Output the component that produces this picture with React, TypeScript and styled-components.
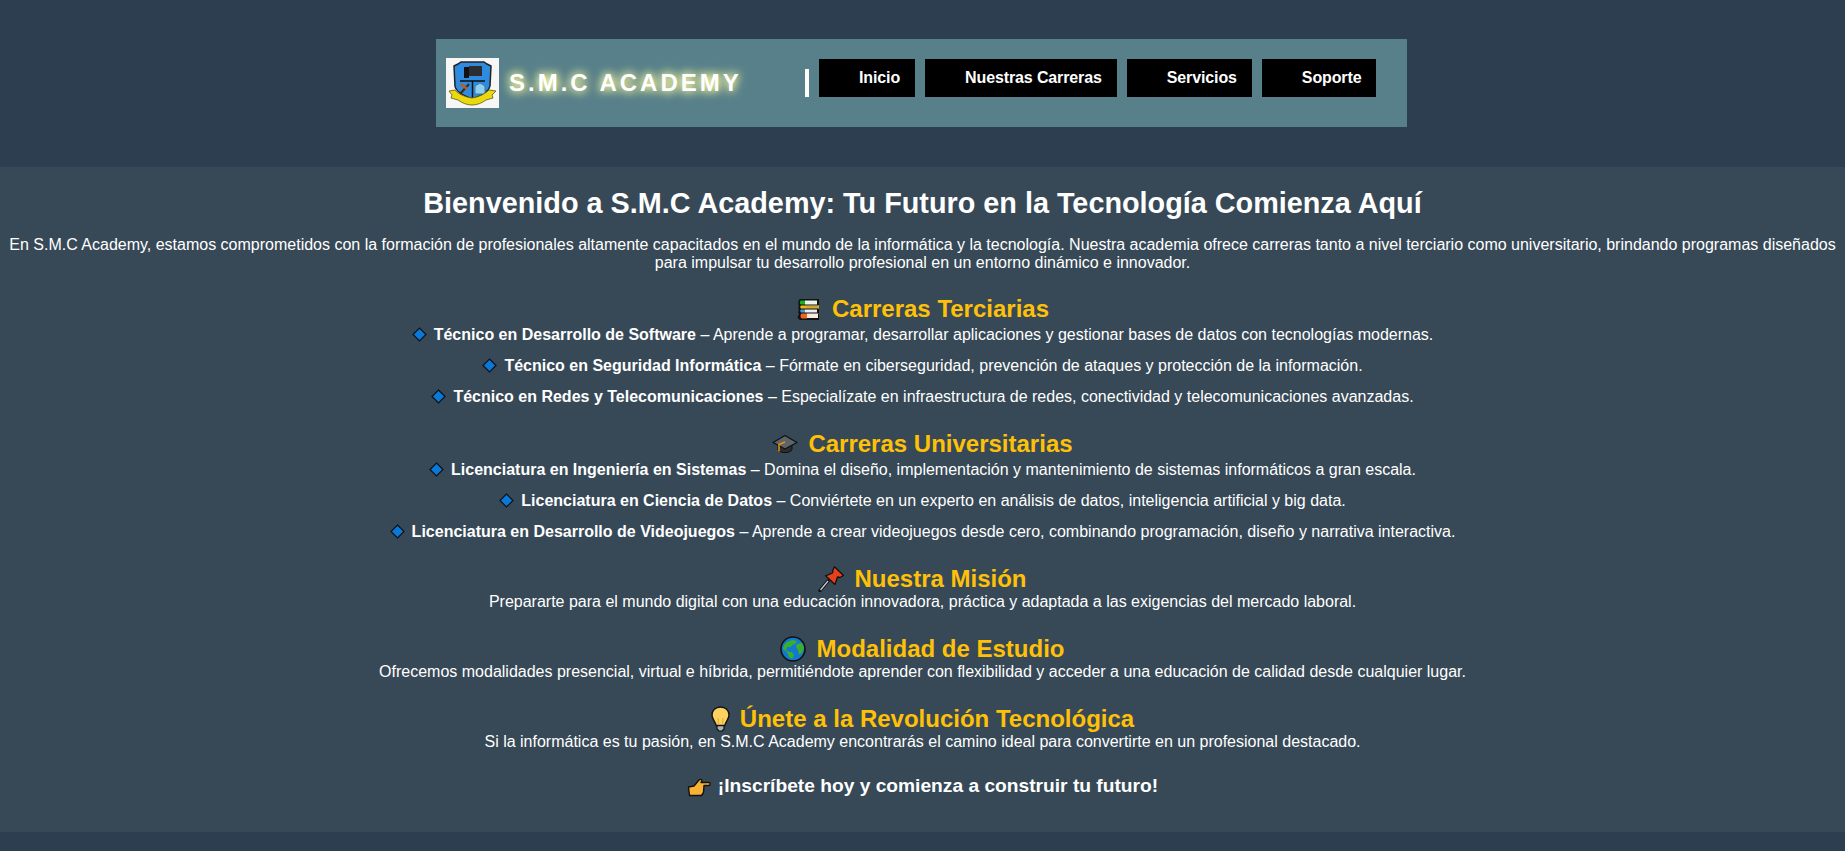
import React from "react";
import styled, { createGlobalStyle } from "styled-components";

const GlobalStyle = createGlobalStyle`
    html, body {
        margin: 0;
        padding: 0;
        background: #2c3e50;
        color: #ffffff;
        font-family: "Liberation Sans", Arial, sans-serif;
        font-size: 16px;
    }
`;

const Page = styled.div`
    min-height: 851px;
    display: flex;
    flex-direction: column;
    align-items: stretch;
`;

const TopBar = styled.header`
    padding: 39px 2px 40px 0;
    display: flex;
    justify-content: center;
`;

const HeaderPanel = styled.div`
    width: 971px;
    height: 88px;
    box-sizing: border-box;
    padding-left: 10px;
    background: #58808a;
    display: flex;
    align-items: center;
`;

const Logo = styled.svg`
    width: 53px;
    height: 50px;
    flex: none;
`;

const Brand = styled.div`
    width: 296px;
    margin-left: 10px;
    font-size: 24px;
    font-weight: bold;
    letter-spacing: 3px;
    color: #ffffff;
    white-space: nowrap;
    text-shadow: 0 0 8px #ffff9e, 0 0 12px #ffffa0;
`;

const Nav = styled.nav`
    align-self: flex-start;
    margin-top: 20px;
    display: flex;
    align-items: flex-end;
    gap: 10px;
`;

const Divider = styled.span`
    width: 4px;
    height: 28px;
    background: #ffffff;
`;

const NavLink = styled.a`
    display: block;
    background: #000000;
    color: #ffffff;
    font-weight: bold;
    line-height: 18px;
    letter-spacing: -0.12px;
    padding: 10px 15px 10px 40px;
`;

const Main = styled.main`
    background: #374957;
    height: 665px;
    box-sizing: border-box;
    padding-top: 20px;
    text-align: center;
`;

const Title = styled.h1`
    margin: 0 0 16px;
    font-size: 28.8px;
    line-height: 33px;
    font-weight: bold;
`;

const Intro = styled.p`
    margin: 0 0 23px;
    line-height: 18px;
`;

const Section = styled.section`
    margin-bottom: 24px;
`;

const Heading = styled.h2`
    margin: 0;
    color: #ffc107;
    font-size: 24px;
    line-height: 28px;
    font-weight: bold;
`;

const Emoji = styled.svg<{ $w?: number }>`
    width: ${({ $w }) => $w ?? 26}px;
    height: 26px;
    margin-right: 10px;
    vertical-align: -5px;
`;

const Text = styled.p`
    margin: 0;
    line-height: 18px;
`;

const List = styled.ul`
    list-style: none;
    margin: 3px 0 0;
    padding: 0;
`;

const Item = styled.li`
    line-height: 18px;
    margin-bottom: 13px;

    &:last-child {
        margin-bottom: 0;
    }
`;

const DiamondIcon = styled.svg`
    width: 15px;
    height: 15px;
    margin-right: 7px;
    vertical-align: -2px;
`;

const Closing = styled.p`
    margin: 0;
    font-size: 19.2px;
    font-weight: bold;
    line-height: 22px;
`;

const ClosingIcon = styled.svg`
    width: 24px;
    height: 20px;
    margin-right: 7px;
    vertical-align: -5px;
`;

const Diamond = () => (
    <DiamondIcon viewBox="0 0 15 15">
        <path d="M7.500 1 14 7.500 7.500 14 1 7.500Z" fill="#0a78d8" stroke="#111" strokeWidth="1.2" />
    </DiamondIcon>
);

const Books = () => (
    <Emoji viewBox="0 0 26 26">
        <path
            d="M4 3h19v6h-1v4h1v4h-1v1h1v6H5c-2 0-4-2-3-4 .5-1 1-1.500 1-2-1-1-1-3 0-4-1-1-1-3 0-4-1-2-1-6 1-7Z"
            fill="#111"
        />
        <path d="M5 4.500h4v4H5c-1.500 0-1.500-4 0-4Z" fill="#16b024" />
        <path d="M9 4.500h12v4H9z" fill="#eaf5ea" />
        <path d="M5 9.500h5v3H5c-1-.5-1-2.500 0-3Z" fill="#f5b70a" />
        <path d="M10 9.500h13v1.200H10z" fill="#f9e08a" />
        <path d="M10 10.700h13v1.800H10z" fill="#e8a90c" />
        <path d="M5 13.500h4v3H5c-1-.5-1-2.500 0-3Z" fill="#3f9be8" />
        <path d="M9 13.500h12v3H9z" fill="#e9eef5" />
        <path d="M6 17.500h5v5H6c-2 0-2-5 0-5Z" fill="#f0641e" />
        <path d="M11 17.500h11v4.500H11z" fill="#fbeadf" />
    </Emoji>
);

const Cap = () => (
    <Emoji viewBox="0 0 26 26">
        <path d="M6 12v7c3 3.500 11 3.500 14 0v-7z" fill="#2b2d2f" stroke="#111" />
        <path d="M13 4.500 25 11.500 13 18 1 11.500Z" fill="#5d6468" stroke="#111" strokeWidth="1.4" strokeLinejoin="round" />
        <path d="M13 11 7 13.500v7" fill="none" stroke="#e8950c" strokeWidth="1.5" />
    </Emoji>
);

const Pin = () => (
    <Emoji viewBox="0 0 26 26">
        <path d="M2 24.500 10 15" stroke="#111" strokeWidth="3.400" strokeLinecap="round" />
        <path d="M2.500 24 10 15" stroke="#c8ccd0" strokeWidth="1.300" />
        <path
            d="M16.500.8 25.500 9.500 22 11.500 19.500 11 17 18.500 7.500 9.800 14.500 7 15 3.800Z"
            fill="#e83f1c"
            stroke="#111"
            strokeWidth="1.300"
            strokeLinejoin="round"
        />
    </Emoji>
);

const Globe = () => (
    <Emoji viewBox="0 0 26 26">
        <circle cx="13" cy="13" r="12" fill="#1278d0" stroke="#111" strokeWidth="1.600" />
        <path
            d="M7 6 12 4 17 5 15 8 12 9 11 11 7 11 6 14 9 16 12 16 14 19 12 23 9 21 7 16 3 13 4 9Z"
            fill="#3dae2b"
        />
        <path d="M17 8 22 7 24 12 22 17 19 19 18 14 16 11Z" fill="#3dae2b" />
    </Emoji>
);

const Bulb = () => (
    <Emoji viewBox="0 0 19 26" $w={19}>
        <path d="M6 19h7v4l-2 2H8l-2-2Z" fill="#aab2ba" stroke="#111" strokeWidth="1.200" />
        <path
            d="M9.500 1C14.500 1 18 4.500 18 9c0 4-3 6-4.200 10.500H5.200C4 15 1 13 1 9 1 4.500 4.500 1 9.500 1Z"
            fill="#fbd15f"
            stroke="#111"
            strokeWidth="1.400"
        />
        <path d="M7.500 19 7 12M11.500 19l.5-7" stroke="#eda32e" strokeWidth="1" fill="none" />
    </Emoji>
);

const Hand = () => (
    <ClosingIcon viewBox="0 0 24 20">
        <path
            d="M1.500 10 7 9l5-6c1-1 3-1 3 1l-1 1.500h8c1.500 0 1.500 3 0 3h-5l-.5 7-2 3H2.500Z"
            fill="#f9b233"
            stroke="#111"
            strokeWidth="1.400"
            strokeLinejoin="round"
        />
    </ClosingIcon>
);

const SchoolLogo = () => (
    <Logo viewBox="0 0 53 50">
        <rect width="53" height="50" fill="#f6f6f6" />
        <path d="M8 8l4-2 3-2h23l3 2 4 2-1 20c-1 7-12 11-17 13C21 39 10 35 9 28Z" fill="#2f8be0" stroke="#222" strokeWidth="1.500" />
        <rect x="18" y="9" width="5" height="11" fill="#111" />
        <rect x="23" y="8" width="13" height="10" fill="#2b2d30" />
        <path d="M14 23h25M26.500 23v17" stroke="#111" strokeWidth="1.500" />
        <path d="M14 36 23 26" stroke="#3a2a18" strokeWidth="2" />
        <path d="M15 26l6 5" stroke="#c45a1a" strokeWidth="2.500" />
        <path d="M29 36V28l5-3 5 3v8Z" fill="#8fd0ee" stroke="#3a7fa8" />
        <path
            d="M3 33l6-1c3 4 10 7 17 8 7-1 13-4 17-8l7 1-4 4 1 3-7 2c-4 3-9 5-14 5s-10-2-14-5l-7-2 1-3Z"
            fill="#e9d90e"
            stroke="#5e5a10"
            strokeWidth=".8"
        />
    </Logo>
);

const tertiary = [
    ["Técnico en Desarrollo de Software", "Aprende a programar, desarrollar aplicaciones y gestionar bases de datos con tecnologías modernas."],
    ["Técnico en Seguridad Informática", "Fórmate en ciberseguridad, prevención de ataques y protección de la información."],
    ["Técnico en Redes y Telecomunicaciones", "Especialízate en infraestructura de redes, conectividad y telecomunicaciones avanzadas."],
];

const university = [
    ["Licenciatura en Ingeniería en Sistemas", "Domina el diseño, implementación y mantenimiento de sistemas informáticos a gran escala."],
    ["Licenciatura en Ciencia de Datos", "Conviértete en un experto en análisis de datos, inteligencia artificial y big data."],
    ["Licenciatura en Desarrollo de Videojuegos", "Aprende a crear videojuegos desde cero, combinando programación, diseño y narrativa interactiva."],
];

const Careers = ({ items }: { items: string[][] }) => (
    <List>
        {items.map(([name, text]) => (
            <Item key={name}>
                <Diamond />
                <strong>{name}</strong> – {text}
            </Item>
        ))}
    </List>
);

export default function App() {
    return (
        <Page>
            <GlobalStyle />
            <TopBar>
                <HeaderPanel>
                    <SchoolLogo />
                    <Brand>S.M.C ACADEMY</Brand>
                    <Nav>
                        <Divider />
                        <NavLink>Inicio</NavLink>
                        <NavLink>Nuestras Carreras</NavLink>
                        <NavLink>Servicios</NavLink>
                        <NavLink>Soporte</NavLink>
                    </Nav>
                </HeaderPanel>
            </TopBar>
            <Main>
                <Title>Bienvenido a S.M.C Academy: Tu Futuro en la Tecnología Comienza Aquí</Title>
                <Intro>
                    En S.M.C Academy, estamos comprometidos con la formación de profesionales altamente capacitados en
                    el mundo de la informática y la tecnología. Nuestra academia ofrece carreras tanto a nivel terciario
                    como universitario, brindando programas diseñados para impulsar tu desarrollo profesional en un
                    entorno dinámico e innovador.
                </Intro>
                <Section>
                    <Heading>
                        <Books />
                        Carreras Terciarias
                    </Heading>
                    <Careers items={tertiary} />
                </Section>
                <Section>
                    <Heading>
                        <Cap />
                        Carreras Universitarias
                    </Heading>
                    <Careers items={university} />
                </Section>
                <Section>
                    <Heading>
                        <Pin />
                        Nuestra Misión
                    </Heading>
                    <Text>
                        Prepararte para el mundo digital con una educación innovadora, práctica y adaptada a las
                        exigencias del mercado laboral.
                    </Text>
                </Section>
                <Section>
                    <Heading>
                        <Globe />
                        Modalidad de Estudio
                    </Heading>
                    <Text>
                        Ofrecemos modalidades presencial, virtual e híbrida, permitiéndote aprender con flexibilidad y
                        acceder a una educación de calidad desde cualquier lugar.
                    </Text>
                </Section>
                <Section>
                    <Heading>
                        <Bulb />
                        Únete a la Revolución Tecnológica
                    </Heading>
                    <Text>
                        Si la informática es tu pasión, en S.M.C Academy encontrarás el camino ideal para convertirte en
                        un profesional destacado.
                    </Text>
                </Section>
                <Closing>
                    <Hand />
                    ¡Inscríbete hoy y comienza a construir tu futuro!
                </Closing>
            </Main>
        </Page>
    );
}
